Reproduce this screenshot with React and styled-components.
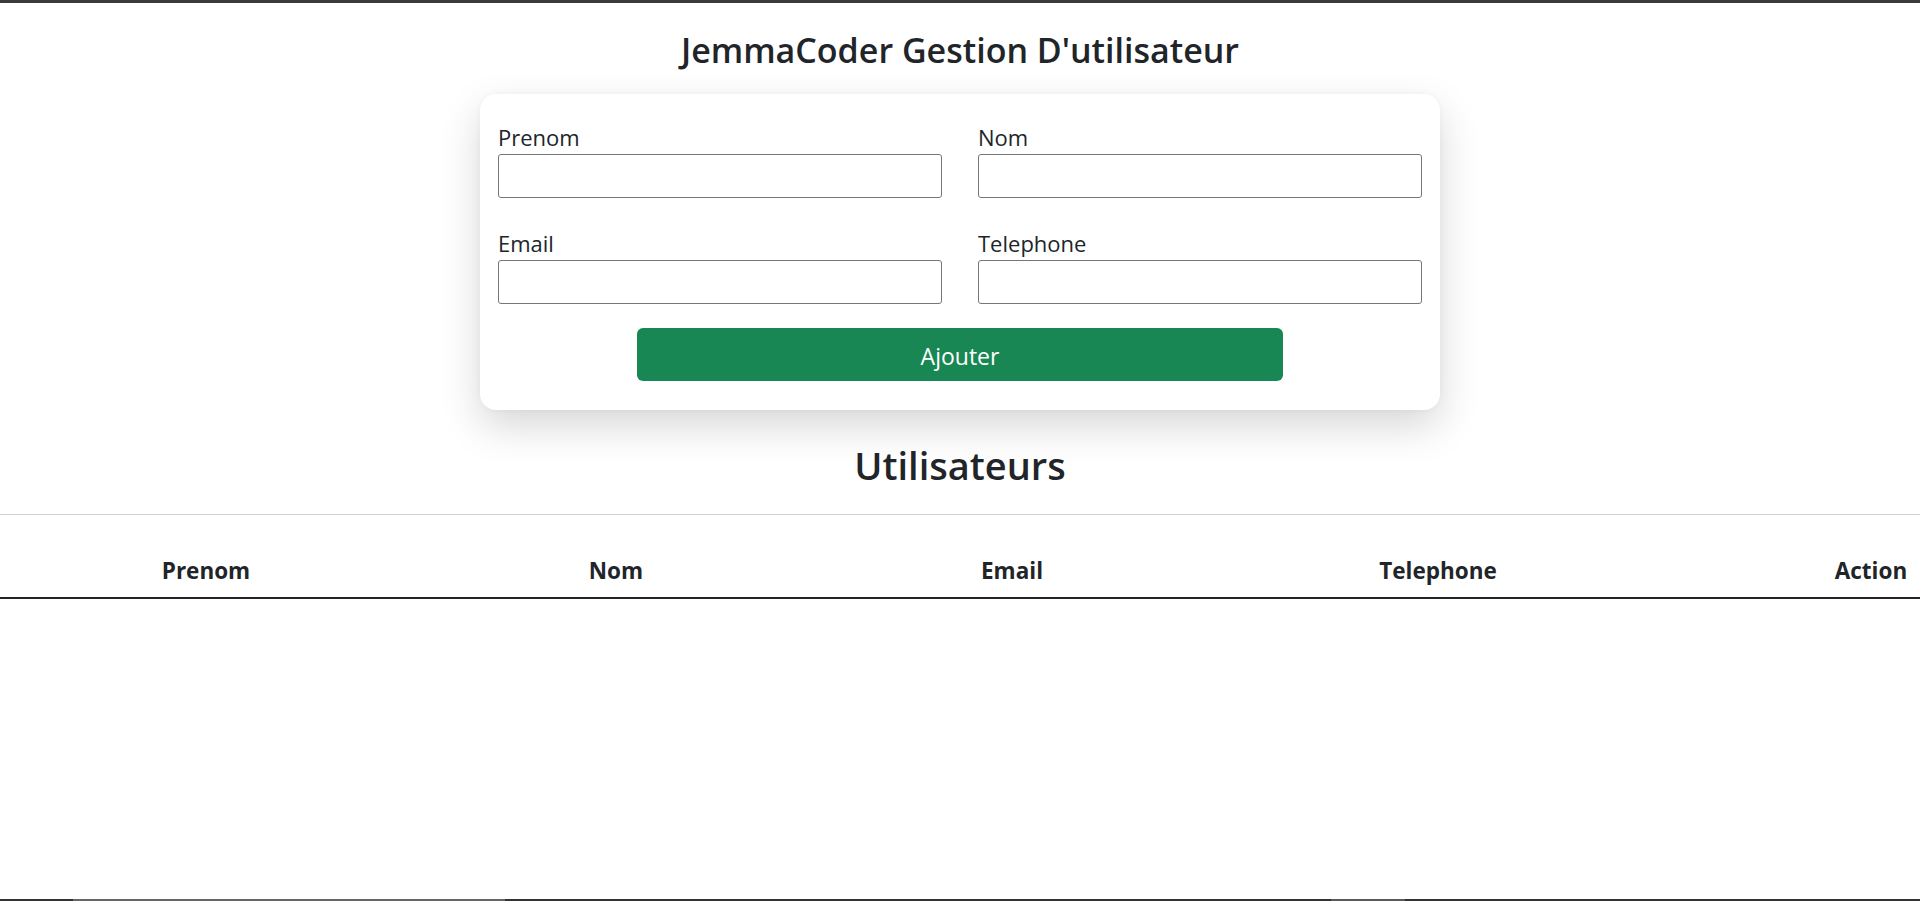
import React, { useState } from "react";
import styled, { createGlobalStyle } from "styled-components";

const GlobalStyle = createGlobalStyle`
  html, body {
    margin: 0;
    padding: 0;
    background: #fff;
  }
  body {
    border-top: 3px solid #3b3b3b;
    font-family: "Open Sans", "Noto Sans", "Liberation Sans", sans-serif;
    color: #212529;
    overflow-x: hidden;
  }
  * {
    box-sizing: border-box;
  }
`;

const Page = styled.div`
  display: flex;
  flex-direction: column;
  align-items: center;
`;

const Title = styled.h3`
  margin: 27px 0 0;
  font-size: 34px;
  line-height: 1.2;
  font-weight: 600;
  text-align: center;
`;

const Card = styled.form`
  width: 960px;
  margin-top: 23px;
  padding: 29px 18px 29px;
  background: #fff;
  border-radius: 16px;
  box-shadow: 0 16px 40px rgba(0, 0, 0, 0.16), 0 0 6px rgba(0, 0, 0, 0.04);
`;

const FieldGrid = styled.div`
  display: grid;
  grid-template-columns: 1fr 1fr;
  column-gap: 36px;
  row-gap: 31px;
`;

const Field = styled.div`
  display: flex;
  flex-direction: column;
`;

const Label = styled.label`
  font-size: 22px;
  line-height: 28px;
  margin-bottom: 3px;
  color: #212529;
`;

const Input = styled.input`
  height: 44px;
  width: 100%;
  border: 1px solid #767676;
  border-radius: 3px;
  padding: 0 10px;
  font: inherit;
  font-size: 18px;
  outline: none;
`;

const SubmitButton = styled.button`
  display: block;
  width: 646px;
  height: 53px;
  margin: 24px auto 0;
  padding: 3px 0 0;
  border: none;
  border-radius: 6px;
  background: #198754;
  color: #fff;
  font-family: inherit;
  font-size: 23px;
  cursor: pointer;
`;

const SectionTitle = styled.h2`
  margin: 33px 0 0;
  font-size: 38px;
  line-height: 1.2;
  font-weight: 600;
  text-align: center;
`;

const TableWrap = styled.div`
  width: 100%;
  margin-top: 26px;
  overflow: hidden;
`;

const Table = styled.table`
  width: 2070px;
  table-layout: fixed;
  border-collapse: collapse;
  border-top: 1px solid #d3d3d3;
`;

const HeadCell = styled.th`
  width: ${(p) => p.$width}px;
  padding: 39px 0 10px;
  font-size: 22.5px;
  line-height: 33px;
  font-weight: 700;
  text-align: center;
  border-bottom: 2px solid #212529;
`;

const columns = [
  { label: "Prenom", width: 412 },
  { label: "Nom", width: 408 },
  { label: "Email", width: 384 },
  { label: "Telephone", width: 468 },
  { label: "Action", width: 398 },
];

const fields = [
  { name: "prenom", label: "Prenom" },
  { name: "nom", label: "Nom" },
  { name: "email", label: "Email" },
  { name: "telephone", label: "Telephone" },
];

const ScreenEdge = styled.div`
  position: fixed;
  left: 0;
  right: 0;
  bottom: 0;
  height: 2px;
  background: linear-gradient(
    to right,
    #333 0 73px,
    #666 73px 505px,
    #333 505px 1331px,
    #5a5a5a 1331px 1405px,
    #333 1405px
  );
`;

export default function App() {
  const [values, setValues] = useState({ prenom: "", nom: "", email: "", telephone: "" });
  const [users, setUsers] = useState([]);

  const handleSubmit = (e) => {
    e.preventDefault();
    setUsers([...users, values]);
    setValues({ prenom: "", nom: "", email: "", telephone: "" });
  };

  return (
    <>
      <GlobalStyle />
      <Page>
        <Title>JemmaCoder Gestion D'utilisateur</Title>
        <Card onSubmit={handleSubmit}>
          <FieldGrid>
            {fields.map((f) => (
              <Field key={f.name}>
                <Label htmlFor={f.name}>{f.label}</Label>
                <Input
                  id={f.name}
                  value={values[f.name]}
                  onChange={(e) => setValues({ ...values, [f.name]: e.target.value })}
                />
              </Field>
            ))}
          </FieldGrid>
          <SubmitButton type="submit">Ajouter</SubmitButton>
        </Card>
        <SectionTitle>Utilisateurs</SectionTitle>
        <TableWrap>
          <Table>
            <thead>
              <tr>
                {columns.map((c) => (
                  <HeadCell key={c.label} $width={c.width}>
                    {c.label}
                  </HeadCell>
                ))}
              </tr>
            </thead>
            <tbody>
              {users.map((u, i) => (
                <tr key={i}>
                  <td>{u.prenom}</td>
                  <td>{u.nom}</td>
                  <td>{u.email}</td>
                  <td>{u.telephone}</td>
                  <td />
                </tr>
              ))}
            </tbody>
          </Table>
        </TableWrap>
      </Page>
      <ScreenEdge />
    </>
  );
}
